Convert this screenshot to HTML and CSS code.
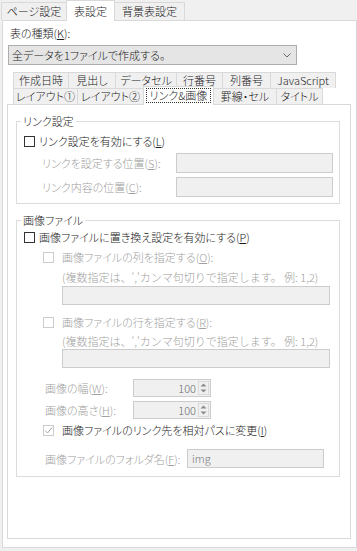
FILE: index.html
```html
<!DOCTYPE html>
<html lang="ja">
<head>
<meta charset="utf-8">
<title>表設定</title>
<link rel="stylesheet" href="styles.css">
</head>
<body>
<div class="tabs-top">
  <div class="ttab t1">ページ設定</div>
  <div class="ttab t2 sel">表設定</div>
  <div class="ttab t3">背景表設定</div>
</div>
<div class="panel">
  <div class="kind-label">表の種類(<u>K</u>):</div>
  <div class="select">
    <span>全データを1ファイルで作成する。</span>
    <svg class="chev" width="8" height="5" viewBox="0 0 8 5"><polyline points="0.5,0.5 4,4 7.5,0.5" fill="none" stroke="#6a6a6a" stroke-width="1"/></svg>
  </div>
  <div class="itabs">
    <div class="trow r1">
      <div class="itab">作成日時</div>
      <div class="itab">見出し</div>
      <div class="itab">データセル</div>
      <div class="itab">行番号</div>
      <div class="itab">列番号</div>
      <div class="itab">JavaScript</div>
    </div>
    <div class="trow r2">
      <div class="itab">レイアウト①</div>
      <div class="itab">レイアウト②</div>
      <div class="itab sel"><span class="focus">リンク&amp;画像</span></div>
      <div class="itab">罫線・セル</div>
      <div class="itab">タイトル</div>
    </div>
  </div>
  <div class="tabpanel">
    <fieldset class="grp g1">
      <legend>リンク設定</legend>
      <div class="cbrow main">
        <span class="cb"></span><span>リンク設定を有効にする(<u>L</u>)</span>
      </div>
      <div class="frow">
        <span class="lbl dis">リンクを設定する位置(<u>S</u>):</span>
        <span class="tb link"></span>
      </div>
      <div class="frow">
        <span class="lbl dis">リンク内容の位置(<u>C</u>):</span>
        <span class="tb link"></span>
      </div>
    </fieldset>
    <fieldset class="grp g2">
      <legend>画像ファイル</legend>
      <div class="cbrow main first">
        <span class="cb"></span><span>画像ファイルに置き換え設定を有効にする(<u>P</u>)</span>
      </div>
      <div class="cbrow sub b1">
        <span class="cb off"></span><span class="dis">画像ファイルの列を指定する(<u>O</u>):</span>
      </div>
      <div class="note dis n1">(複数指定は、','カンマ句切りで指定します。 例: 1,2)</div>
      <span class="tb wide w1"></span>
      <div class="cbrow sub b2">
        <span class="cb off"></span><span class="dis">画像ファイルの行を指定する(<u>R</u>):</span>
      </div>
      <div class="note dis n2">(複数指定は、','カンマ句切りで指定します。 例: 1,2)</div>
      <span class="tb wide w2"></span>
      <div class="srow s1">
        <span class="slbl dis">画像の幅(<u>W</u>):</span>
        <span class="spin"><span class="val">100</span><span class="arr"><svg width="9" height="14" viewBox="0 0 9 14"><polygon points="1.5,5.5 4.5,2.5 7.5,5.5" fill="#8a8a8a"/><polygon points="1.5,8.5 4.5,11.5 7.5,8.5" fill="#8a8a8a"/></svg></span></span>
      </div>
      <div class="srow s2">
        <span class="slbl dis">画像の高さ(<u>H</u>):</span>
        <span class="spin"><span class="val">100</span><span class="arr"><svg width="9" height="14" viewBox="0 0 9 14"><polygon points="1.5,5.5 4.5,2.5 7.5,5.5" fill="#8a8a8a"/><polygon points="1.5,8.5 4.5,11.5 7.5,8.5" fill="#8a8a8a"/></svg></span></span>
      </div>
      <div class="cbrow sub chk">
        <span class="cb off"><svg width="9" height="9" viewBox="0 0 9 9"><polyline points="1,4.5 3.5,7 8,1.5" fill="none" stroke="#a8a8a8" stroke-width="1"/></svg></span><span>画像ファイルのリンク先を相対パスに変更(<u>I</u>)</span>
      </div>
      <div class="srow fold">
        <span class="flbl dis">画像ファイルのフォルダ名(<u>F</u>):</span>
        <span class="tb folder">img</span>
      </div>
    </fieldset>
  </div>
</div>
</body>
</html>
```

FILE: styles.css
```css
* { box-sizing: border-box; }

body {
  margin: 0;
  width: 357px;
  height: 551px;
  overflow: hidden;
  background: #f0f0f0;
  color: #1a1a1a;
  font-family: "Noto Sans CJK JP", "Noto Sans", sans-serif;
  font-size: 11px;
  font-weight: 300;
  line-height: 14px;
  font-feature-settings: "palt";
}

u { text-decoration: underline; text-underline-offset: 1px; }

/* top tabs */
.tabs-top {
  display: flex;
  align-items: flex-end;
  height: 20px;
  margin-left: 1px;
  position: relative;
  z-index: 2;
}
.ttab {
  height: 18px;
  border: 1px solid #d9d9d9;
  border-bottom: none;
  background: #f0f0f0;
  text-align: center;
  line-height: 16px;
  white-space: nowrap;
}
.ttab + .ttab { margin-left: -1px; }
.t1 { width: 66px; }
.t2 { width: 49px; }
.t3 { width: 71px; }
.ttab.sel {
  height: 21px;
  margin-bottom: -1px;
  background: #fff;
  line-height: 20px;
  position: relative;
  z-index: 3;
}

/* main panel */
.panel {
  margin-left: 2px;
  width: 355px;
  height: 528px;
  border: 1px solid #d9d9d9;
  background: #fff;
  padding-top: 5px;
}
.kind-label {
  margin-left: 7px;
  height: 14px;
}
.select {
  margin: 5px 0 0 5px;
  width: 289px;
  height: 20px;
  border: 1px solid #adadad;
  background: #e5e5e5;
  display: flex;
  align-items: center;
  justify-content: space-between;
  padding: 0 5px 0 3px;
}
.chev { display: block; }

/* inner tabs */
.itabs { margin: 7px 0 0 10px; }
.trow { display: flex; height: 16px; }
.itab {
  height: 16px;
  border: 1px solid #d9d9d9;
  border-bottom: none;
  background: #f0f0f0;
  text-align: center;
  line-height: 15px;
  white-space: nowrap;
}
.itab + .itab { margin-left: -1px; }
.r1 .itab:nth-child(1) { width: 56px; }
.r1 .itab:nth-child(2) { width: 48px; }
.r1 .itab:nth-child(3) { width: 62px; }
.r1 .itab:nth-child(4) { width: 47px; }
.r1 .itab:nth-child(5) { width: 49px; }
.r1 .itab:nth-child(6) { width: 66px; }
.r2 .itab:nth-child(1) { width: 65px; }
.r2 .itab:nth-child(2) { width: 67px; }
.r2 .itab:nth-child(3) { width: 71px; }
.r2 .itab:nth-child(4) { width: 64px; }
.r2 .itab:nth-child(5) { width: 47px; }
.itab.sel {
  height: 19px;
  margin-top: -2px;
  margin-bottom: -1px;
  background: #fff;
  position: relative;
  z-index: 2;
  padding: 1px 2px 2px;
}
.focus {
  display: block;
  height: 15px;
  border: 1px dotted #333;
  line-height: 13px;
}

/* tab panel */
.tabpanel {
  margin-left: 4px;
  width: 344px;
  height: 435px;
  border: 1px solid #d9d9d9;
  background: #fff;
  padding: 9px 0 0 8px;
}

.grp {
  margin: 0;
  width: 324px;
  border: 1px solid #dcdcdc;
  padding: 0 6px 6px 0;
  min-inline-size: 0;
}
.grp legend {
  margin-left: 4px;
  padding: 0 2px;
  line-height: 14px;
  height: 14px;
}
.g2 { margin-top: 9px; padding-bottom: 8px; }

.dis { color: #a0a0a0; }

.cbrow {
  display: flex;
  align-items: center;
  height: 16px;
  white-space: nowrap;
}
.cbrow.main { padding-left: 7px; }
.g1 .cbrow.main { margin-top: 5px; }
.g2 .cbrow.first { margin-top: 2px; }
.cb {
  width: 11px;
  height: 11px;
  border: 1px solid #333;
  background: #fff;
  margin-right: 4px;
  flex: none;
  display: flex;
  align-items: center;
  justify-content: center;
}
.cb.off { border-color: #cccccc; margin-right: 8px; }
.cb svg { display: block; }
.cbrow.sub { padding-left: 26px; }
.b1 { margin-top: 4px; }
.b2 { margin-top: 9px; }
.chk { margin-top: 3px; }

.frow {
  display: flex;
  align-items: center;
  margin-top: 4px;
  padding-left: 25px;
}
.lbl { flex: 1; white-space: nowrap; }
.tb {
  display: block;
  border: 1px solid #cccccc;
  background: #f0f0f0;
  flex: none;
}
.tb.link { width: 157px; height: 20px; }

.note {
  padding-left: 45px;
  height: 14px;
  white-space: nowrap;
  font-feature-settings: normal;
}
.n1 { margin-top: 5px; }
.n2 { margin-top: 4px; }
.tb.wide { margin-left: 45px; width: 268px; height: 19px; }
.w1 { margin-top: 2px; }
.w2 { margin-top: 1px; }

.srow {
  display: flex;
  align-items: center;
  padding-left: 28px;
  white-space: nowrap;
}
.s1 { margin-top: 11px; }
.s2 { margin-top: 4px; }
.slbl { width: 88px; }
.spin {
  width: 78px;
  height: 18px;
  border: 1px solid #cccccc;
  background: #f0f0f0;
  display: flex;
  align-items: center;
  justify-content: flex-end;
  padding-right: 1px;
}
.val { color: #6d6d6d; margin-right: 2px; line-height: 14px; }
.arr {
  width: 11px;
  height: 14px;
  border: 1px solid #dadada;
  display: flex;
  align-items: center;
  justify-content: center;
}
.arr svg { display: block; }

.fold { margin-top: 11px; }
.flbl { width: 142px; }
.tb.folder {
  width: 137px;
  height: 19px;
  color: #7a7a7a;
  padding-left: 4px;
  line-height: 16px;
}
```
